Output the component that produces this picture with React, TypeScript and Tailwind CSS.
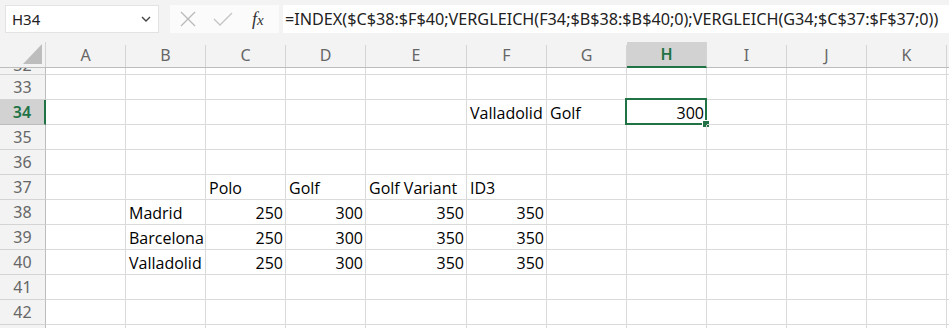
import React from "react";

const COLS = ["A", "B", "C", "D", "E", "F", "G", "H", "I", "J", "K", "L"];
const WIDTHS = ["w-[80px]", "w-[80px]", "w-[80px]", "w-[80px]", "w-[101px]", "w-[80px]", "w-[80px]", "w-[80px]", "w-[80px]", "w-[80px]", "w-[80px]", "w-[80px]"];

type Cell = { t: string; n?: boolean };
const DATA: Record<number, Record<string, Cell>> = {
  34: { F: { t: "Valladolid" }, G: { t: "Golf" }, H: { t: "300", n: true } },
  37: { C: { t: "Polo" }, D: { t: "Golf" }, E: { t: "Golf Variant" }, F: { t: "ID3" } },
  38: { B: { t: "Madrid" }, C: { t: "250", n: true }, D: { t: "300", n: true }, E: { t: "350", n: true }, F: { t: "350", n: true } },
  39: { B: { t: "Barcelona" }, C: { t: "250", n: true }, D: { t: "300", n: true }, E: { t: "350", n: true }, F: { t: "350", n: true } },
  40: { B: { t: "Valladolid" }, C: { t: "250", n: true }, D: { t: "300", n: true }, E: { t: "350", n: true }, F: { t: "350", n: true } },
};

const ROWS = [33, 34, 35, 36, 37, 38, 39, 40, 41, 42, 43];

function Row({ r }: { r: number }) {
  const sel = r === 34;
  return (
    <div className="flex h-[25px] shrink-0">
      <div
        className={
          sel
            ? "w-[46px] shrink-0 h-[25px] bg-[#d2d2d2] border-b border-[#bdbdbd] border-r-2 border-r-[#217346] flex items-center justify-center text-[16px] text-[#217346] font-semibold"
            : "w-[46px] shrink-0 h-[25px] bg-[#f3f3f3] border-b border-r border-[#d4d4d4] border-r-[#bdbdbd] flex items-center justify-center text-[16px] text-[#666666]"
        }
        style={{ fontFamily: '"Noto Sans", sans-serif' }}
      >
        {r < 43 ? r : ""}
      </div>
      {COLS.map((c, i) => {
        const cell = DATA[r]?.[c];
        const isSel = sel && c === "H";
        return (
          <div
            key={c}
            className={`${WIDTHS[i]} shrink-0 h-[25px] border-r border-b border-[#dadada] flex items-end pb-[1px] text-[16px] leading-[20px] text-[#000000] relative ${cell?.n ? "justify-end pr-[2px]" : "justify-start pl-[3px]"}`}
          >
            {cell ? <span className="whitespace-nowrap">{cell.t}</span> : null}
            {isSel && (
              <>
                <div className="absolute left-[-2px] top-[-2px] w-[82px] h-[27px] border-2 border-[#217346] pointer-events-none" />
                <div className="absolute right-[-4px] bottom-[-4px] w-[6px] h-[6px] bg-[#217346] border border-white box-content" />
              </>
            )}
          </div>
        );
      })}
    </div>
  );
}

export default function App() {
  return (
    <div
      className="w-[949px] h-[328px] overflow-hidden bg-white flex flex-col"
      style={{ fontFamily: '"Open Sans", sans-serif' }}
    >
      {/* Formula bar */}
      <div className="h-[42px] shrink-0 bg-[#f3f3f3] flex items-start pt-[5px] pl-[5px]">
        <div
          className="w-[154px] h-[28px] bg-white border border-[#e3e3e3] flex items-center justify-between pl-[6px] pr-[7px] text-[15px] text-[#222]"
          style={{ fontFamily: '"Noto Sans", sans-serif' }}
        >
          <span>H34</span>
          <svg width="10" height="6" viewBox="0 0 10 6">
            <path d="M1 1 L5 5 L9 1" fill="none" stroke="#444" strokeWidth="1.4" />
          </svg>
        </div>
        <div className="ml-[11px] w-[109px] h-[28px] bg-[#fbfbfb] flex items-center">
          <svg width="16" height="16" viewBox="0 0 16 16" className="ml-[10px]">
            <path d="M1 1 L15 15 M15 1 L1 15" stroke="#b9b9b9" strokeWidth="1.3" />
          </svg>
          <svg width="20" height="16" viewBox="0 0 20 16" className="ml-[17px]">
            <path d="M1 8 L7 14 L19 2" fill="none" stroke="#c4c4c4" strokeWidth="1.3" />
          </svg>
          <span
            className="ml-[19px] text-[18px] italic text-[#333] leading-none"
            style={{ fontFamily: '"Liberation Serif", serif' }}
          >
            f<span className="text-[15px]">x</span>
          </span>
        </div>
        <div
          className="ml-[4px] flex-1 h-[28px] bg-white flex items-center pl-[2px] text-[16.2px] text-[#222] whitespace-nowrap overflow-hidden"
          style={{ fontFamily: '"Noto Sans", sans-serif' }}
        >
          =INDEX($C$38:$F$40;VERGLEICH(F34;$B$38:$B$40;0);VERGLEICH(G34;$C$37:$F$37;0))
        </div>
      </div>

      {/* Column headers */}
      <div className="flex h-[26px] shrink-0 bg-[#f3f3f3] border-b border-[#bdbdbd]" style={{ fontFamily: '"Noto Sans", sans-serif' }}>
        <div className="w-[46px] shrink-0 border-r border-[#d4d4d4] relative">
          <svg width="19" height="20" viewBox="0 0 19 20" className="absolute right-[3px] bottom-[3px]">
            <path d="M19 0 L19 20 L0 20 Z" fill="#bdbdbd" />
          </svg>
        </div>
        {COLS.map((c, i) => (
          <div
            key={c}
            className={
              c === "H"
                ? `${WIDTHS[i]} shrink-0 bg-[#d2d2d2] border-b-2 border-[#217346] border-r border-r-[#d4d4d4] mb-[-1px] flex items-center justify-center text-[16px] text-[#217346] font-semibold`
                : `${WIDTHS[i]} shrink-0 border-r border-[#d4d4d4] mt-[3px] flex items-center justify-center text-[16px] text-[#666666] pb-[3px]`
            }
          >
            {c === "L" ? "" : c}
          </div>
        ))}
      </div>

      {/* Partial row 32 */}
      <div className="flex h-[7px] shrink-0">
        <div
          className="w-[46px] shrink-0 h-[7px] bg-[#f3f3f3] border-b border-r border-[#d4d4d4] border-r-[#bdbdbd] overflow-hidden text-[16px] text-[#666666]"
          style={{ fontFamily: '"Noto Sans", sans-serif' }}
        >
          <div className="h-[25px] mt-[-16px] flex items-center justify-center">32</div>
        </div>
        {COLS.map((c, i) => (
          <div key={c} className={`${WIDTHS[i]} shrink-0 h-[7px] border-r border-b border-[#dadada]`} />
        ))}
      </div>

      {ROWS.map((r) => (
        <Row key={r} r={r} />
      ))}
    </div>
  );
}
